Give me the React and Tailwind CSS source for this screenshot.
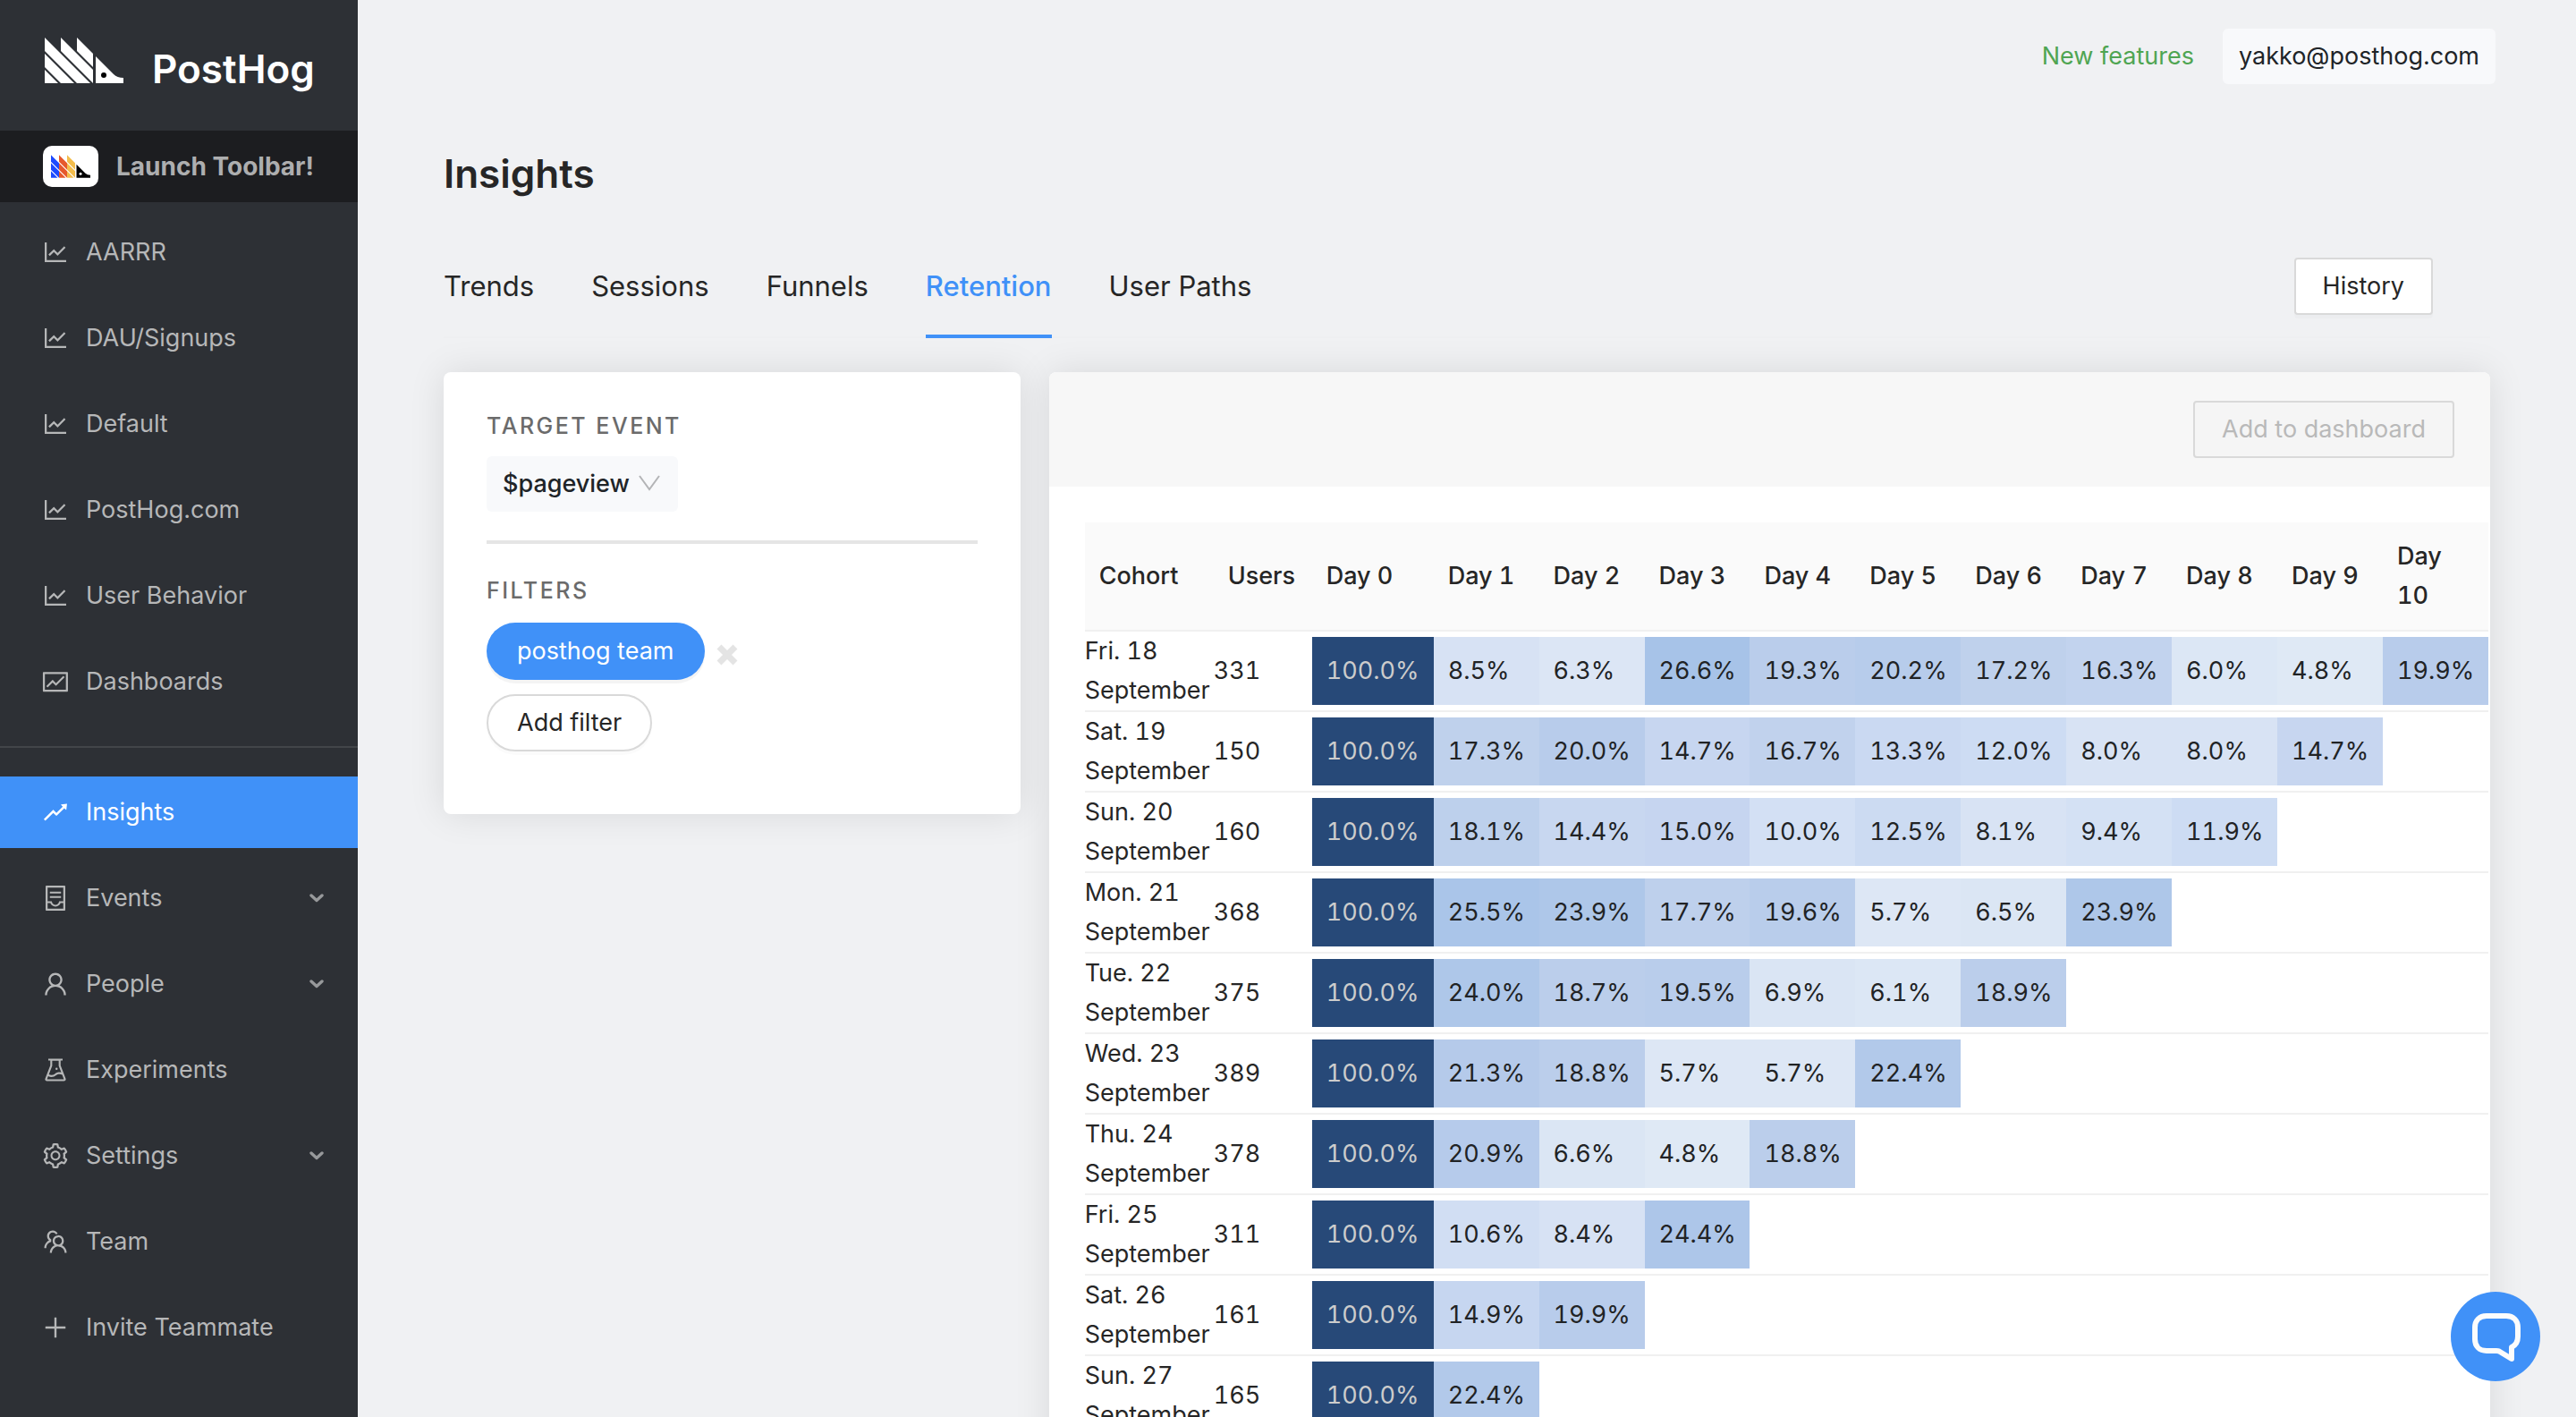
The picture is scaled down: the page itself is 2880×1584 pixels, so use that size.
import {
  AiOutlineLineChart,
  AiOutlineFund,
  AiOutlineRise,
  AiOutlineContainer,
  AiOutlineUser,
  AiOutlineExperiment,
  AiOutlineSetting,
  AiOutlineTeam,
  AiOutlinePlus,
} from "react-icons/ai";

const pinned = [
  { label: "AARRR", Icon: AiOutlineLineChart },
  { label: "DAU/Signups", Icon: AiOutlineLineChart },
  { label: "Default", Icon: AiOutlineLineChart },
  { label: "PostHog.com", Icon: AiOutlineLineChart },
  { label: "User Behavior", Icon: AiOutlineLineChart },
  { label: "Dashboards", Icon: AiOutlineFund },
];

const sections = [
  { label: "Insights", Icon: AiOutlineRise, active: true },
  { label: "Events", Icon: AiOutlineContainer, expandable: true },
  { label: "People", Icon: AiOutlineUser, expandable: true },
  { label: "Experiments", Icon: AiOutlineExperiment },
  { label: "Settings", Icon: AiOutlineSetting, expandable: true },
  { label: "Team", Icon: AiOutlineTeam },
  { label: "Invite Teammate", Icon: AiOutlinePlus },
];

const tabs = ["Trends", "Sessions", "Funnels", "Retention", "User Paths"];

const cohorts = [
  { day: "Fri. 18", users: 331, values: [100, 8.5, 6.3, 26.6, 19.3, 20.2, 17.2, 16.3, 6.0, 4.8, 19.9] },
  { day: "Sat. 19", users: 150, values: [100, 17.3, 20.0, 14.7, 16.7, 13.3, 12.0, 8.0, 8.0, 14.7] },
  { day: "Sun. 20", users: 160, values: [100, 18.1, 14.4, 15.0, 10.0, 12.5, 8.1, 9.4, 11.9] },
  { day: "Mon. 21", users: 368, values: [100, 25.5, 23.9, 17.7, 19.6, 5.7, 6.5, 23.9] },
  { day: "Tue. 22", users: 375, values: [100, 24.0, 18.7, 19.5, 6.9, 6.1, 18.9] },
  { day: "Wed. 23", users: 389, values: [100, 21.3, 18.8, 5.7, 5.7, 22.4] },
  { day: "Thu. 24", users: 378, values: [100, 20.9, 6.6, 4.8, 18.8] },
  { day: "Fri. 25", users: 311, values: [100, 10.6, 8.4, 24.4] },
  { day: "Sat. 26", users: 161, values: [100, 14.9, 19.9] },
  { day: "Sun. 27", users: 165, values: [100, 22.4] },
];

// Colour stops of the retention heat scale: [percentage, [r, g, b]].
const stops = [
  [0, [240, 246, 252]],
  [4.8, [223, 233, 245]],
  [8, [216, 227, 244]],
  [12, [205, 220, 243]],
  [14.7, [199, 214, 240]],
  [17.3, [191, 209, 236]],
  [20, [184, 204, 235]],
  [26.6, [167, 195, 232]],
  [100, [39, 73, 120]],
];

function heatColor(value) {
  const i = Math.max(1, stops.findIndex(([at]) => value <= at));
  const [a, from] = stops[i - 1];
  const [b, to] = stops[i];
  const t = (value - a) / (b - a);
  return `rgb(${from.map((c, k) => Math.round(c + (to[k] - c) * t)).join(" ")})`;
}

const HEAD = "M57 21L77 41Q81 45 88 45V51H57Z";

function LogoWhite() {
  return (
    <svg viewBox="0 0 88 51" className="h-[51px] w-22" aria-hidden="true">
      <g fill="#fff">
        <path d="M36 0L54 18V33L36 15Z" />
        <path d="M18 0L54 36V51L18 15Z" />
        <path d="M0 0L51 51H36L0 15Z" />
        <path d="M0 18L33 51H18L0 33Z" />
        <path d="M0 36L15 51H0Z" />
        <path d={HEAD} />
      </g>
      <circle cx="66" cy="42" r="3" fill="#000" />
    </svg>
  );
}

function LogoColor() {
  return (
    <svg viewBox="0 0 88 51" className="h-[26px] w-11" aria-hidden="true">
      {["#1d4aff", "#e6592c", "#f3bd4c"].map((fill, i) => (
        <path
          key={fill}
          fill={fill}
          transform={`translate(${i * 18} 0)`}
          d="M0 0L18 18V33L0 15ZM0 18L18 36V51L0 33ZM0 36L15 51H0Z"
        />
      ))}
      <path d={HEAD} fill="#000" />
      <circle cx="66" cy="42" r="3" fill="#fff" />
    </svg>
  );
}

function NavItem({ label, Icon, active, expandable }) {
  return (
    <li>
      <a
        href="#"
        className={
          active
            ? "flex h-20 items-center bg-[#4091f8] pr-9.5 pl-11.5 text-white"
            : "flex h-20 items-center pr-9.5 pl-11.5 text-[#b6b7b8]"
        }
      >
        <Icon size={32} className="mr-4.5 shrink-0" />
        <span className="grow">{label}</span>
        {expandable && (
          <svg viewBox="0 0 16 10" className="h-2.5 w-4" fill="none" aria-hidden="true">
            <path d="M2 2L8 7.5L14 2" stroke="#97999b" strokeWidth="3.4" strokeLinecap="round" strokeLinejoin="round" />
          </svg>
        )}
      </a>
    </li>
  );
}

function Sidebar() {
  return (
    <aside className="w-100 shrink-0 bg-[#2d3035]">
      <a href="#" className="flex h-[146px] items-start pt-[42px] pl-[50px]">
        <LogoWhite />
        <span className="mt-2 ml-8 text-[44px] leading-[54px] font-semibold text-white">PostHog</span>
      </a>
      <a href="#" className="flex h-20 items-center gap-5 bg-[#1c1d20] pl-12 text-[28px] font-bold text-[#adaeaf]">
        <span className="flex h-[46px] w-[62px] items-center justify-center rounded-[10px] bg-white">
          <LogoColor />
        </span>
        Launch Toolbar!
      </a>
      <nav>
        <ul className="mt-4 flex flex-col gap-4">
          {pinned.map((item) => (
            <NavItem key={item.label} {...item} />
          ))}
        </ul>
        <hr className="mt-8 mb-8 border-t-2 border-[#424549]" />
        <ul className="flex flex-col gap-4">
          {sections.map((item) => (
            <NavItem key={item.label} {...item} />
          ))}
        </ul>
      </nav>
    </aside>
  );
}

function FilterCard() {
  return (
    <section className="col-span-7 self-start rounded-lg bg-white px-12 pt-10 pb-[70px] shadow-[0_0_40px_rgba(0,0,0,0.1)]">
      <label htmlFor="target-event" className="block text-[25px] leading-10 font-medium tracking-widest text-[#6b6b6b]">
        TARGET EVENT
      </label>
      <div className="relative mt-3.5 h-[62px] w-[214px]">
        <select
          id="target-event"
          className="size-full appearance-none rounded-md bg-[#f8f9fb] pl-4.5 font-medium text-[#202428]"
        >
          <option>$pageview</option>
        </select>
        <svg viewBox="0 0 24 18" className="pointer-events-none absolute top-[21px] right-5 h-4.5 w-6" fill="none" aria-hidden="true">
          <path d="M1 1L12 16L23 1" stroke="#b3b4b6" strokeWidth="2" />
        </svg>
      </div>
      <hr className="my-8 border-t-4 border-[#e5e5e5]" />
      <h2 className="text-[25px] leading-10 font-medium tracking-widest text-[#6b6b6b]">FILTERS</h2>
      <div className="mt-4 flex items-center gap-3">
        <button className="h-16 rounded-full bg-[#4091f8] px-8.5 text-white shadow-[0_4px_0_rgba(0,0,0,0.045)]">
          posthog team
        </button>
        <button aria-label="Remove filter" className="mt-2">
          <svg viewBox="0 0 26 26" className="size-6.5" fill="none" aria-hidden="true">
            <path d="M4 4L22 22M22 4L4 22" stroke="#e4e4e4" strokeWidth="7" />
          </svg>
        </button>
      </div>
      <button className="mt-4 h-16 rounded-full border-2 border-[#d9d9d9] bg-white px-8 shadow-[0_4px_0_rgba(0,0,0,0.015)]">
        Add filter
      </button>
    </section>
  );
}

function RetentionTable() {
  return (
    <table className="w-full table-fixed border-collapse text-left leading-11 tabular-nums">
      <colgroup>
        <col className="w-36" />
        <col className="w-[110px]" />
        <col className="w-[136px]" />
        {cohorts.map((c) => (
          <col key={c.day} />
        ))}
      </colgroup>
      <thead>
        <tr className="border-b-2 border-[#f0f0f0] bg-[#fafafa]">
          <th className="px-4 py-4 font-medium">Cohort</th>
          <th className="py-4 pl-4 font-medium">Users</th>
          {cohorts[0].values.map((_, i) => (
            <th key={i} className="px-4 py-4 font-medium">
              Day {i}
            </th>
          ))}
        </tr>
      </thead>
      <tbody>
        {cohorts.map((c) => (
          <tr key={c.day} className="border-b-2 border-[#f0f0f0]">
            <td>{c.day} September</td>
            <td>{c.users}</td>
            {cohorts[0].values.map((_, i) => (
              <td key={i}>
                {i < c.values.length && (
                  <div
                    className={i === 0 ? "py-4 pl-4 text-[#cccccc]" : "py-4 pl-4 text-[#212325]"}
                    style={{ backgroundColor: heatColor(c.values[i]) }}
                  >
                    {c.values[i].toFixed(1)}%
                  </div>
                )}
              </td>
            ))}
          </tr>
        ))}
      </tbody>
    </table>
  );
}

export default function App() {
  return (
    <div className="flex h-screen overflow-hidden bg-[#f0f1f3] font-['Inter',sans-serif] text-[27px] leading-11 text-[#262626]">
      <Sidebar />
      <main className="grow overflow-y-auto [scrollbar-width:none]">
        <header className="flex items-center justify-end gap-8 pt-8 pr-[90px]">
          <a href="#" className="text-[#4fa552]">
            New features
          </a>
          <button className="h-[62px] rounded-md bg-[#f8f9fb] px-4.5 text-[#202428]">yakko@posthog.com</button>
        </header>
        <div className="px-24 pb-12">
          <h1 className="mt-17 text-[44px] leading-16 font-semibold">Insights</h1>
          <div className="mt-9 flex items-center justify-between shadow-[inset_0_-2px_0_#eeeff1]">
            <div role="tablist" className="flex gap-16 text-[31px]">
              {tabs.map((tab) => (
                <button
                  key={tab}
                  role="tab"
                  aria-selected={tab === "Retention"}
                  className={
                    tab === "Retention"
                      ? "border-b-4 border-[#4091f8] pt-9 pb-8 font-medium text-[#4091f8]"
                      : "border-b-4 border-transparent pt-9 pb-8"
                  }
                >
                  {tab}
                </button>
              ))}
            </div>
            <button className="mr-16 h-16 rounded-sm border-2 border-[#d9d9d9] bg-white px-7.5 shadow-[0_4px_0_rgba(0,0,0,0.015)]">
              History
            </button>
          </div>
          <div className="mt-9.5 grid grid-cols-24 gap-x-8">
            <FilterCard />
            <section className="col-span-17 rounded-lg bg-white shadow-[0_0_40px_rgba(0,0,0,0.1)]">
              <div className="flex justify-end rounded-t-lg bg-[#f7f7f7] px-10 py-8">
                <button disabled className="h-16 rounded-sm border-2 border-[#d9d9d9] bg-[#f5f5f5] px-7.5 text-[#b9b9b9]">
                  Add to dashboard
                </button>
              </div>
              <div className="pt-10 pr-0.5 pb-10 pl-10">
                <RetentionTable />
              </div>
            </section>
          </div>
        </div>
      </main>
      <button
        aria-label="Open chat"
        className="fixed right-10 bottom-10 size-25 rounded-full bg-[#4091f8]"
      >
        <svg viewBox="0 0 100 100" className="size-full" fill="none" aria-hidden="true">
          <path
            d="M40 27H62C70 27 75 32 75 40V50C75 56 72 60 68 62V75L54 66.500Q53 66 51 66H40C32 66 27 61 27 53V40C27 32 32 27 40 27Z"
            stroke="#fcfcfc"
            strokeWidth="6"
            strokeLinejoin="round"
          />
        </svg>
      </button>
    </div>
  );
}
